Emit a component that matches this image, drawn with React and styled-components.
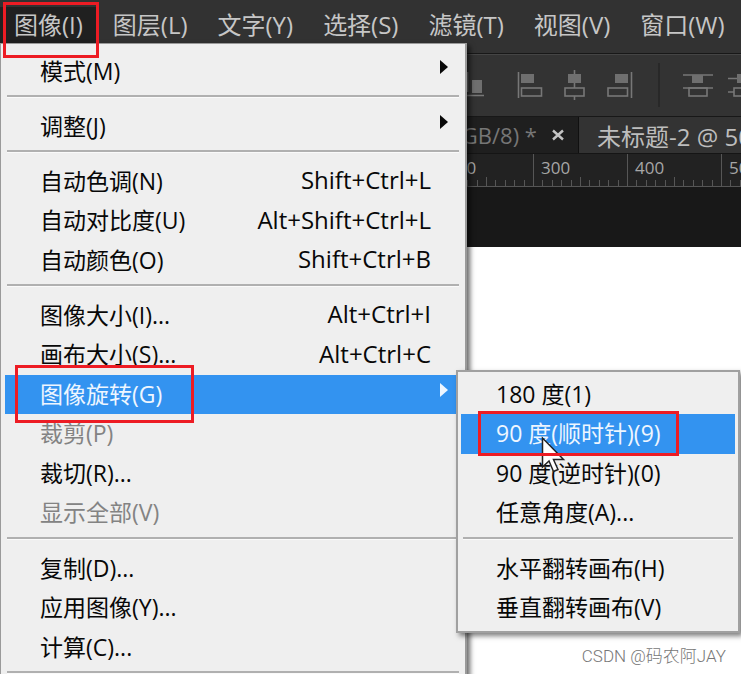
import React from "react";
import styled, { createGlobalStyle, css } from "styled-components";

const GlobalStyle = createGlobalStyle`
  *, *::before, *::after { box-sizing: border-box; }
  body { margin: 0; background: #fff; }
  button {
    margin: 0; padding: 0; border: 0; background: none;
    font: inherit; color: inherit; text-align: left; white-space: nowrap;
  }
`;

const Screen = styled.div`
  position: relative;
  height: 100vh;
  overflow: hidden;
  background: #fff;
  font-family: "Open Sans", "Noto Sans CJK SC", sans-serif;
`;

const MenuBar = styled.nav`
  display: flex;
  gap: 2px;
  padding: 7px 0 10px;
  background: #323232;
`;

const MenuBarButton = styled.button`
  flex: none;
  height: 36px;
  padding: 0 14px;
  line-height: 36px;
  font-size: 24px;
  color: #c6c6c6;
  background: ${(p) => (p.$open ? "#202020" : "transparent")};
`;

const OptionsBar = styled.div`
  display: flex;
  align-items: center;
  height: 64px;
  padding-left: 452px;
  gap: 30px;
  overflow: hidden;
  background: #333;
  border-top: 1px solid #181818;
  border-bottom: 1px solid #181818;
  box-shadow: inset 0 1px #454545;
`;

const ToolGroup = styled.div`
  display: flex;
  flex: none;
  gap: 13px;
`;

const ToolButton = styled.button`
  display: block;
  width: 32px;
  height: 32px;
  svg { display: block; }
`;

const ToolDivider = styled.div`
  flex: none;
  width: 2px;
  height: 44px;
  margin: 0 -8px;
  background: #282828;
`;

const TabStrip = styled.div`
  display: flex;
  height: 37px;
  background: #1f1f1f;
  border-bottom: 1px solid #151515;
`;

const Tab = styled.div`
  display: flex;
  align-items: center;
  flex: none;
  white-space: nowrap;
  ${(p) =>
    p.$active
      ? css`
          flex: 1 0 auto;
          padding-left: 18px;
          font-size: 24px;
          color: #bdbdbd;
          background: #333;
        `
      : css`
          justify-content: flex-end;
          width: 579px;
          padding-right: 13px;
          gap: 14px;
          font-size: 22px;
          color: #767676;
          border-right: 1px solid #101010;
        `}
`;

const TabClose = styled.button`
  width: 14px;
  height: 14px;
  svg { display: block; }
`;

const Ruler = styled.div`
  display: flex;
  height: 33px;
  padding-left: 439px;
  overflow: hidden;
  background: #222;
  border-bottom: 1px solid #555;
`;

const RulerSegment = styled.div`
  display: flex;
  flex: none;
  flex-direction: column;
  justify-content: space-between;
  width: 94px;
  border-left: 1px solid #565656;
`;

const RulerLabel = styled.span`
  padding-left: 7px;
  line-height: 27px;
  font-size: 17px;
  font-weight: 500;
  color: #a6a6a6;
`;

const Ticks = styled.div`
  display: flex;
  align-items: flex-end;
  height: 9px;
  margin-top: -4px;
`;

const Tick = styled.i`
  flex: 1;
  height: ${(p) => (p.$mid ? 9 : 6)}px;
  border-right: ${(p) => (p.$last ? 0 : 1)}px solid #565656;
`;

const Pasteboard = styled.div`
  height: 60px;
  background: #181818;
`;

const Popup = styled.div`
  position: absolute;
  background: #efefef;
  font-size: 23px;
  color: #080808;
`;

const MainMenu = styled(Popup)`
  top: 43px;
  left: 0;
  width: 467px;
  padding: 8px 4px 4px;
  border: 1px solid #9a9a9a;
  border-width: 1px 2px 1px 1px;
  box-shadow: 3px 3px 5px rgba(0, 0, 0, 0.6);
`;

const SubMenu = styled(Popup)`
  top: 370px;
  left: 456px;
  width: 284px;
  padding: 3px;
  border: 2px solid #a0a0a0;
  box-shadow: 3px 3px 5px rgba(0, 0, 0, 0.5);
`;

const Separator = styled.hr`
  height: 2px;
  margin: 4px 2px 10px;
  border: 0;
  background: #b0b0b0;
  box-shadow: 0 1px #fafafa;
`;

const MenuRow = styled.button`
  display: flex;
  align-items: center;
  justify-content: space-between;
  width: 100%;
  height: 39px;
  padding: 0 ${(p) => (p.$arrow ? 12 : 30)}px 4px 35px;
  &:nth-of-type(even) { height: 40px; }
  &:disabled { color: #838383; }
  ${(p) =>
    p.$active &&
    css`
      color: #eef6ff;
      background: #3393f0;
    `}
`;

const Shortcut = styled.span`
  font-size: 24px;
`;

const Arrow = styled.svg`
  display: block;
  margin-bottom: 6px;
`;

const Annotation = styled.div`
  position: absolute;
  top: ${(p) => p.$top}px;
  left: ${(p) => p.$left}px;
  width: ${(p) => p.$width}px;
  height: ${(p) => p.$height}px;
  border: 3px solid #ed1c24;
  pointer-events: none;
`;

const Pointer = styled.svg`
  position: absolute;
  top: 436px;
  left: 541px;
  pointer-events: none;
`;

const Watermark = styled.div`
  position: absolute;
  right: 15px;
  bottom: 6px;
  line-height: 24px;
  font-family: Roboto, "Noto Sans CJK SC", sans-serif;
  font-size: 17px;
  font-weight: 300;
  color: #777;
`;

const bar = ["图像(I)", "图层(L)", "文字(Y)", "选择(S)", "滤镜(T)", "视图(V)", "窗口(W)"];

const mainGroups = [
  [{ label: "模式(M)", arrow: true }],
  [{ label: "调整(J)", arrow: true }],
  [
    { label: "自动色调(N)", keys: "Shift+Ctrl+L" },
    { label: "自动对比度(U)", keys: "Alt+Shift+Ctrl+L" },
    { label: "自动颜色(O)", keys: "Shift+Ctrl+B" },
  ],
  [
    { label: "图像大小(I)...", keys: "Alt+Ctrl+I" },
    { label: "画布大小(S)...", keys: "Alt+Ctrl+C" },
    { label: "图像旋转(G)", arrow: true, active: true },
    { label: "裁剪(P)", disabled: true },
    { label: "裁切(R)..." },
    { label: "显示全部(V)", disabled: true },
  ],
  [{ label: "复制(D)..." }, { label: "应用图像(Y)..." }, { label: "计算(C)..." }],
  [],
];

const rotateGroups = [
  [
    { label: "180 度(1)" },
    { label: "90 度(顺时针)(9)", active: true },
    { label: "90 度(逆时针)(0)" },
    { label: "任意角度(A)..." },
  ],
  [{ label: "水平翻转画布(H)" }, { label: "垂直翻转画布(V)" }],
];

const icons = {
  bottom: (
    <>
      <path d="M14 26.5H32M15.5 3V23" />
      <rect x="20" y="11" width="10" height="13" fill="#6f6f6f" stroke="none" />
    </>
  ),
  left: (
    <>
      <path d="M4.5 3V29" />
      <rect x="7" y="5" width="13" height="9" fill="#6f6f6f" stroke="none" />
      <rect x="7.5" y="19" width="20" height="8" />
    </>
  ),
  center: (
    <>
      <path d="M15.5 1V19M15.5 27V31" />
      <rect x="9" y="5" width="13" height="9" fill="#6f6f6f" stroke="none" />
      <rect x="6" y="19" width="19" height="8" />
    </>
  ),
  right: (
    <>
      <path d="M27.5 3V29" />
      <rect x="11" y="5" width="13" height="9" fill="#6f6f6f" stroke="none" />
      <rect x="4" y="19" width="19.5" height="8" />
    </>
  ),
  spreadTop: (
    <>
      <path d="M1 6H31M1 19H31" />
      <rect x="10" y="6" width="11" height="8" fill="#6f6f6f" stroke="none" />
      <rect x="7" y="19" width="18" height="8" />
    </>
  ),
  spreadMiddle: (
    <>
      <path d="M1 9.5H31M1 23H7M25 23H31" />
      <rect x="10" y="5" width="11" height="9" fill="#6f6f6f" stroke="none" />
      <rect x="7" y="19" width="18" height="8" />
    </>
  ),
};

function Tool({ name }) {
  return (
    <ToolButton aria-label={name}>
      <svg width="32" height="32" fill="none" stroke="#777" strokeWidth="1.6">
        {icons[name]}
      </svg>
    </ToolButton>
  );
}

function Items({ groups }) {
  return groups.map((group, g) => (
    <React.Fragment key={g}>
      {g > 0 && <Separator />}
      <div>
        {group.map((item) => (
          <MenuRow
            key={item.label}
            role="menuitem"
            disabled={item.disabled}
            $active={item.active}
            $arrow={item.arrow}
          >
            <span>{item.label}</span>
            {item.keys && <Shortcut>{item.keys}</Shortcut>}
            {item.arrow && (
              <Arrow width="10" height="14" fill="currentColor" aria-hidden="true">
                <path d="M1 0L9 7L1 14Z" />
              </Arrow>
            )}
          </MenuRow>
        ))}
      </div>
    </React.Fragment>
  ));
}

export default function App() {
  return (
    <Screen>
      <GlobalStyle />
      <MenuBar>
        {bar.map((label, i) => (
          <MenuBarButton key={label} $open={i === 0}>
            {label}
          </MenuBarButton>
        ))}
      </MenuBar>
      <OptionsBar>
        <Tool name="bottom" />
        <ToolGroup>
          <Tool name="left" />
          <Tool name="center" />
          <Tool name="right" />
        </ToolGroup>
        <ToolDivider />
        <ToolGroup>
          <Tool name="spreadTop" />
          <Tool name="spreadMiddle" />
        </ToolGroup>
      </OptionsBar>
      <TabStrip>
        <Tab>
          <span>(RGB/8) *</span>
          <TabClose aria-label="close">
            <svg width="14" height="14" stroke="#c4c4c4" strokeWidth="2.4">
              <path d="M2 2.5L12 11.5M12 2.5L2 11.5" />
            </svg>
          </TabClose>
        </Tab>
        <Tab $active>未标题-2 @ 50</Tab>
      </TabStrip>
      <Ruler>
        {[200, 300, 400, 500].map((value) => (
          <RulerSegment key={value}>
            <RulerLabel>{value}</RulerLabel>
            <Ticks>
              {Array.from({ length: 10 }, (_, i) => (
                <Tick key={i} $mid={i === 4} $last={i === 9} />
              ))}
            </Ticks>
          </RulerSegment>
        ))}
      </Ruler>
      <Pasteboard />
      <Watermark>CSDN @码农阿JAY</Watermark>
      <MainMenu role="menu">
        <Items groups={mainGroups} />
      </MainMenu>
      <SubMenu role="menu">
        <Items groups={rotateGroups} />
      </SubMenu>
      <Pointer width="26" height="38" aria-hidden="true">
        <path
          d="M1.5 2V31L8 25L12.5 35.5L17 33.5L12.5 23.5H22.5Z"
          fill="#fff"
          stroke="#222"
          strokeWidth="1.5"
        />
      </Pointer>
      <Annotation $left={3} $top={2} $width={96} $height={56} />
      <Annotation $left={15} $top={365} $width={179} $height={58} />
      <Annotation $left={478} $top={411} $width={201} $height={45} />
    </Screen>
  );
}
